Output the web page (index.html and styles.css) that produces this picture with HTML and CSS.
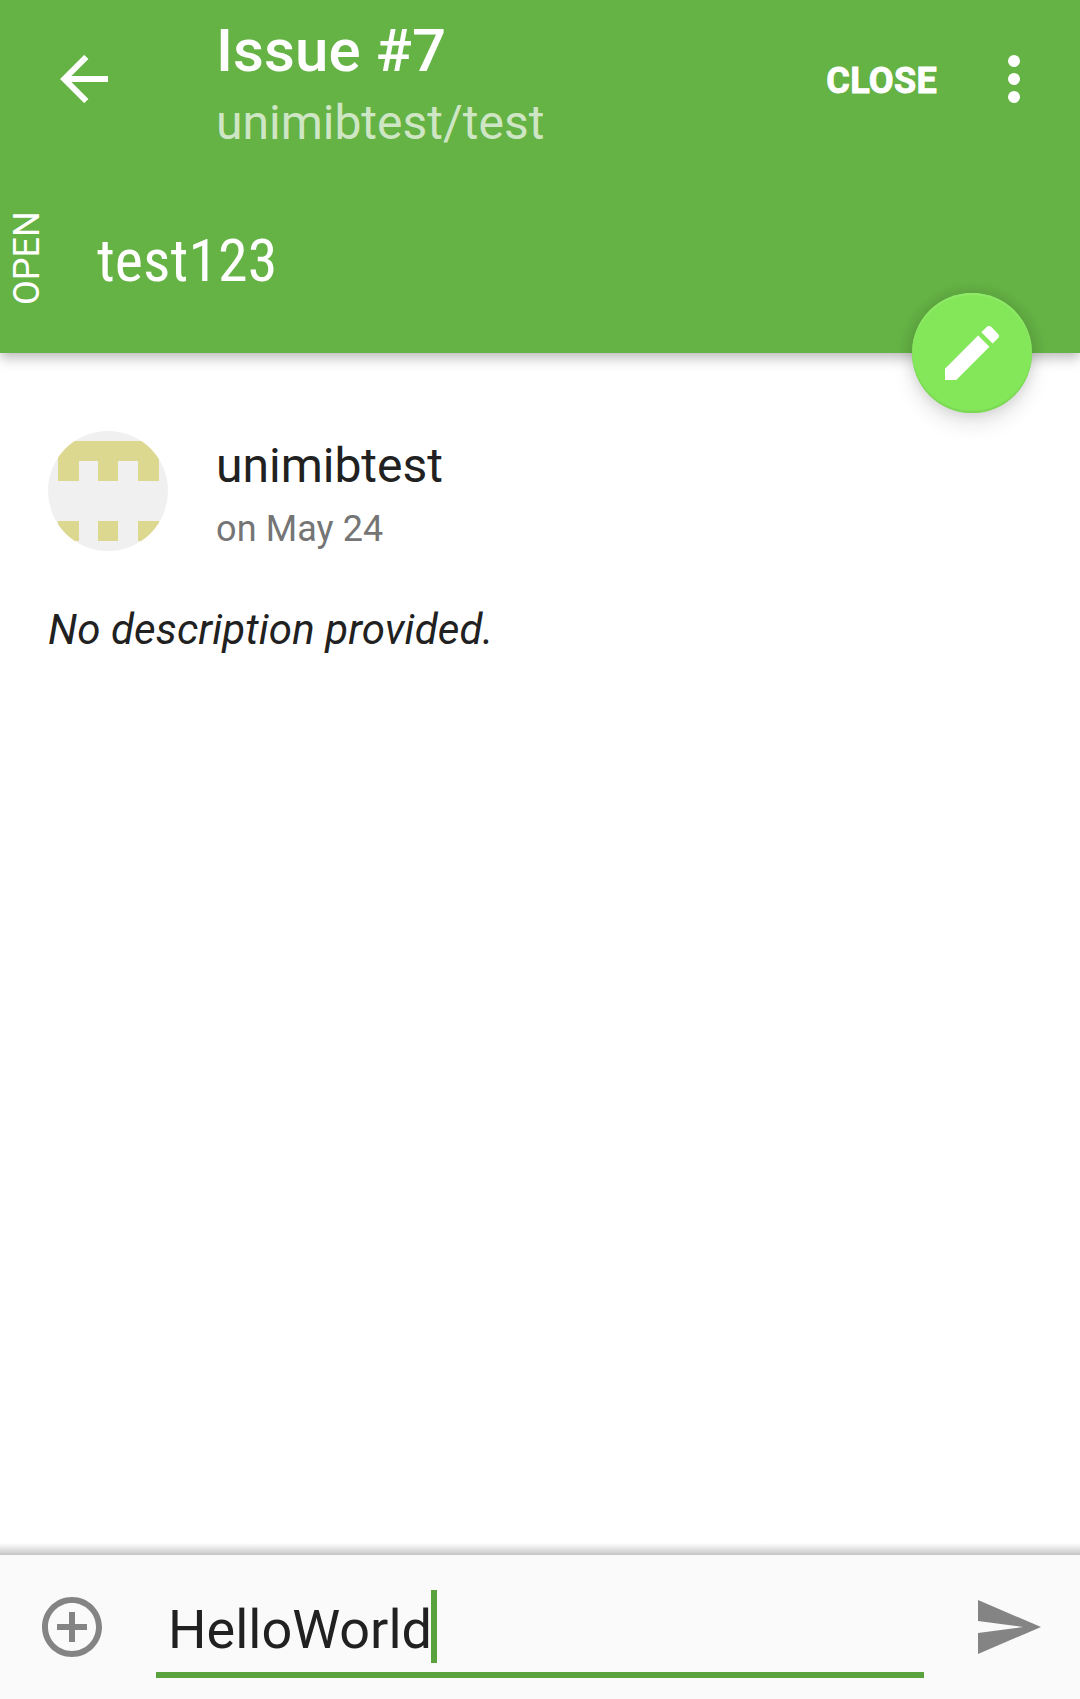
FILE: index.html
```html
<!DOCTYPE html>
<html lang="en">
<head>
<meta charset="utf-8">
<title>Issue #7</title>
<link rel="stylesheet" href="styles.css">
</head>
<body>
<div class="screen">
  <header class="header">
    <div class="toolbar">
      <svg class="back" viewBox="0 0 48 48"><path d="M26.3 2 4.3 24l22 22M3 24h45" fill="none" stroke="#fff" stroke-width="6"/></svg>
      <div class="titles">
        <h1 class="title">Issue #7</h1>
        <div class="subtitle">unimibtest/test</div>
      </div>
      <div class="close">CLOSE</div>
      <svg class="more" viewBox="0 0 12 48" fill="#fff"><circle cx="6" cy="6" r="6"/><circle cx="6" cy="24" r="6"/><circle cx="6" cy="42" r="6"/></svg>
    </div>
    <div class="issue">
      <div class="state">OPEN</div>
      <div class="issue-title">test123</div>
    </div>
    <div class="fab">
      <svg class="icon" viewBox="0 0 24 24" fill="#fff"><path d="M3 17.25V21h3.75L17.81 9.94l-3.75-3.75L3 17.25zM20.71 7.04c.39-.39.39-1.02 0-1.41l-2.34-2.34c-.39-.39-1.02-.39-1.41 0l-1.83 1.83 3.75 3.75 1.83-1.83z"/></svg>
    </div>
  </header>
  <main class="content">
    <div class="author">
      <svg class="avatar" viewBox="0 0 120 120"><rect width="120" height="120" fill="#f0f0f0"/><path fill="#dcd88f" d="M10 10h101v40H90V30H70v20H50V30H31v20H10zM10 90h21v20H10zM50 90h20v20H50zM90 90h21v20H90z"/></svg>
      <div class="byline">
        <div class="name">unimibtest</div>
        <div class="date">on May 24</div>
      </div>
    </div>
    <p class="description">No description provided.</p>
  </main>
  <footer class="composer">
    <svg class="icon" viewBox="0 0 24 24" fill="#848484"><path d="M13 7h-2v4H7v2h4v4h2v-4h4v-2h-4V7zm-1-5C6.48 2 2 6.48 2 12s4.48 10 10 10 10-4.48 10-10S17.52 2 12 2zm0 18c-4.41 0-8-3.59-8-8s3.59-8 8-8 8 3.59 8 8-3.59 8-8 8z"/></svg>
    <div class="field"><span class="value">HelloWorld</span><span class="caret"></span></div>
    <svg class="icon" viewBox="0 0 24 24" fill="#848484"><path d="M2 3 23 12 2 21V14L17 12 2 10z"/></svg>
  </footer>
</div>
</body>
</html>
```
FILE: styles.css
```css
* { box-sizing: border-box; }
body { margin: 0; font-family: Roboto, sans-serif; color: #212121; background: #fff; }
svg { display: block; flex: none; }
.screen { display: flex; flex-direction: column; height: 1699px; overflow: hidden; }
.header { position: relative; height: 353px; background: #65b245; color: #fff; box-shadow: 0 6px 12px rgba(0,0,0,.22), 0 0 10px rgba(0,0,0,.08); }
.toolbar { display: flex; align-items: flex-start; height: 168px; padding: 0 60px; }
.back { width: 48px; height: 48px; margin-top: 55px; }
.titles { flex: 1; margin-left: 108px; padding-top: 16px; }
.title { margin: 0; font-size: 60px; line-height: 70px; font-weight: 500; letter-spacing: .1px; }
.subtitle { margin-top: 9px; font-size: 48px; line-height: 56px; color: rgba(255,255,255,.7); }
.close { margin: 60px 71px 0 0; font-size: 36px; line-height: 42px; font-weight: 700; letter-spacing: .3px; -webkit-text-stroke: .9px #fff; }
.more { width: 12px; height: 48px; margin-top: 55px; }
.issue { display: flex; align-items: flex-start; }
.state { width: 42px; height: 90px; margin: 47px 0 0 6px; writing-mode: vertical-rl; transform: rotate(180deg); font-size: 36px; line-height: 42px; }
.issue-title { margin: 58px 0 0 49px; font-family: "Roboto Condensed", Roboto, sans-serif; font-stretch: 75%; font-size: 60px; line-height: 70px; letter-spacing: .1px; }
.fab { position: absolute; right: 48px; bottom: -60px; display: flex; align-items: center; justify-content: center; width: 120px; height: 120px; border-radius: 50%; background: #84e75a; box-shadow: 0 10px 22px rgba(0,0,0,.11), 0 0 14px rgba(0,0,0,.13), inset 0 -2px 1px #7bd654, inset 0 2px 1px #91e96b; }
.icon { width: 72px; height: 72px; }
.content { flex: 1; padding: 78px 48px 0; }
.author { display: flex; gap: 48px; }
.avatar { width: 120px; height: 120px; border-radius: 50%; }
.byline { padding-top: 7px; }
.name { font-size: 48px; line-height: 56px; }
.date { margin-top: 14px; font-size: 36px; line-height: 42px; letter-spacing: .1px; color: #757575; }
.description { margin: 54px 0 0; font-size: 42px; line-height: 50px; font-style: italic; letter-spacing: .12px; }
.composer { position: relative; display: flex; align-items: center; height: 144px; padding: 0 36px; background: #fafafa; }
.composer::before { content: ""; position: absolute; left: 0; right: 0; bottom: 100%; height: 12px; background: linear-gradient(#fff, #c6c6c6); }
.field { display: flex; align-items: flex-start; width: 768px; height: 88px; margin: 14px 48px 0; padding-left: 12px; border-bottom: 6px solid #5aa23e; }
.value { font-size: 54px; line-height: 64px; padding-top: 8px; }
.caret { width: 6px; height: 73px; margin-left: -1px; background: #5aa23e; }
```
